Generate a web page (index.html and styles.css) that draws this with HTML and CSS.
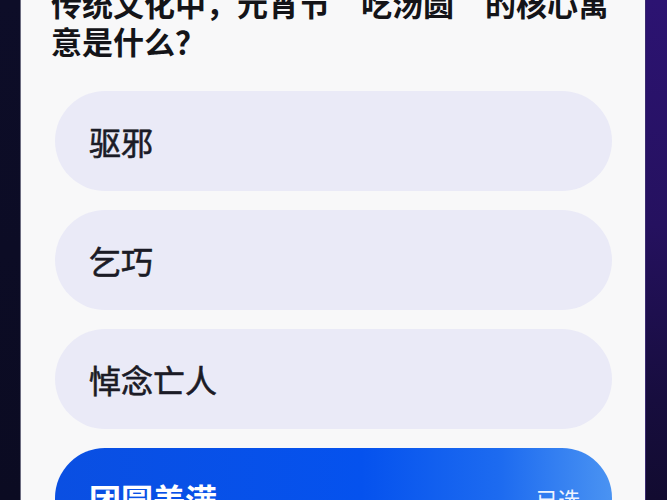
FILE: index.html
```html
<!DOCTYPE html>
<html lang="zh-CN">
<head>
<meta charset="utf-8">
<title>元宵节问答</title>
<link rel="stylesheet" href="styles.css">
</head>
<body>
<div class="stage">
  <main class="card">
    <h1 class="question">传统文化中，元宵节<span class="q">“</span>吃汤圆<span class="q">”</span>的核心寓意是什么？</h1>
    <ul class="options">
      <li class="option">驱邪</li>
      <li class="option">乞巧</li>
      <li class="option">悼念亡人</li>
      <li class="option selected"><span>团圆美满</span><span class="tag">已选</span></li>
    </ul>
  </main>
</div>
</body>
</html>
```
FILE: styles.css
```css
html, body {
  margin: 0;
  padding: 0;
  height: 100%;
  overflow: hidden;
}
body {
  background:
    linear-gradient(180deg, #2c1372 0%, #25115f 45%, #170d3e 80%, #120b30 100%) right / 22px 100% no-repeat,
    linear-gradient(180deg, #0d0d28 0%, #0b0b22 100%);
  font-family: "Noto Sans CJK SC", "Noto Sans", sans-serif;
}
.stage {
  padding-left: 21px;
  padding-right: 22px;
}
.card {
  background: #f8f8f9;
  box-shadow: -1px 0 0 #6c6c80, 1px 0 0 #3a2a70;
  padding: 0 33px 0 34px;
  min-height: 560px;
}
.question {
  margin: -16px -3px 0 -4px;
  font-size: 31px;
  line-height: 38px;
  font-weight: 700;
  color: #141418;
}
.q {
  font-feature-settings: "fwid" 1;
}
.options {
  list-style: none;
  margin: 31px 0 0 0;
  padding: 0;
  display: flex;
  flex-direction: column;
  gap: 19px;
}
.option {
  height: 100px;
  border-radius: 50px;
  background: #eaeaf7;
  display: flex;
  align-items: center;
  justify-content: space-between;
  padding: 0 32px 0 34px;
  font-size: 32px;
  font-weight: 400;
  -webkit-text-stroke: 0.6px currentColor;
  color: #1b1b26;
}
.option.selected {
  background: linear-gradient(90deg, #0a4fe2 0%, #0552ee 55%, #1d6bf0 80%, #4a93f2 100%);
  color: #ffffff;
  font-weight: 700;
  -webkit-text-stroke: 0;
}
.tag {
  font-size: 22px;
  font-weight: 400;
  color: #eef3ff;
}
```
